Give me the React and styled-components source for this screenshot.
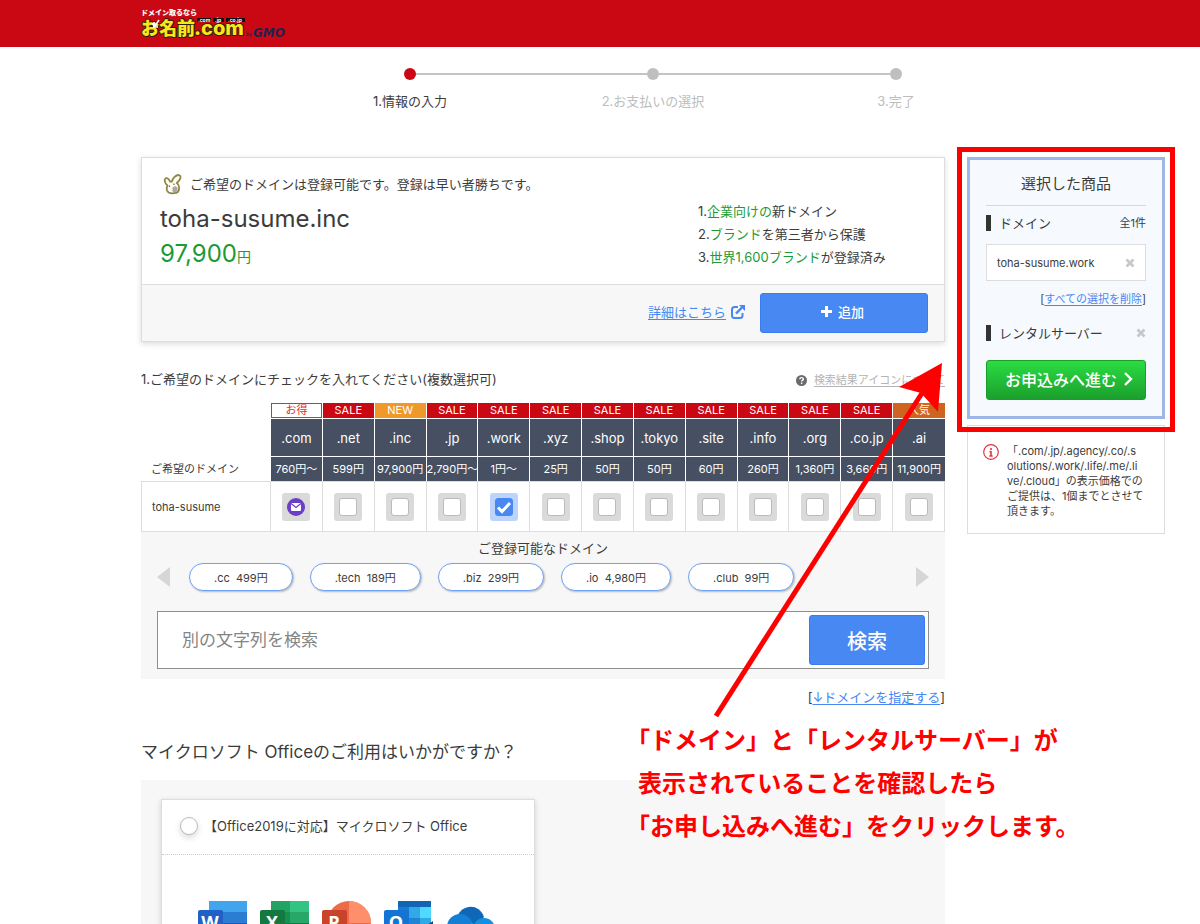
import React, { useState } from "react";
import styled, { createGlobalStyle, css } from "styled-components";

const GlobalStyle = createGlobalStyle`
  *, *::before, *::after { box-sizing: border-box; }
  html { scrollbar-width: none; }
  body {
    margin: 0;
    background: #fff;
    color: #3c3c3c;
    font-family: Inter, "Noto Sans CJK JP", sans-serif;
    font-size: 13px;
    line-height: 20px;
  }
  h1, h2, h3, p, ol, ul { margin: 0; padding: 0; font-weight: 400; }
  ol, ul { list-style: none; }
  button, input { font-family: inherit; color: inherit; }
  button { cursor: pointer; }
`;

const blue = "#4788f2";
const green = "#1c9a33";
const line = "#ddd";
const soft = "#f7f7f7";

const Header = styled.header`
  display: flex;
  height: 47px;
  padding: 8px 35px 0 141px;
  background: #ca0813;
`;

const Steps = styled.ol`
  display: flex;
  justify-content: center;
  padding: 21px 35px 0 141px;
`;

const Step = styled.li`
  width: 243px;
  text-align: center;
  color: ${(p) => (p.$active ? "#3c3c3c" : "#bdbdbd")};
`;

const Track = styled.div`
  display: flex;
  align-items: center;
  margin-bottom: 11px;
`;

const Rail = styled.span`
  flex: 1;
  height: 2px;
  background: ${(p) => (p.$hidden ? "transparent" : "#c4c4c4")};
`;

const Dot = styled.span`
  width: 12px;
  height: 12px;
  border-radius: 50%;
  background: ${(p) => (p.$active ? "#ca0813" : "#bfbfbf")};
`;

const Content = styled.div`
  position: relative;
  display: flex;
  align-items: flex-start;
  gap: 22px;
  padding: 46px 35px 0 141px;
`;

const Main = styled.main`
  flex: 1;
  min-width: 0;
`;

const Link = styled.a`
  color: ${(p) => (p.$muted ? "#b4b4b4" : blue)};
  text-decoration: underline;
  text-underline-offset: 2px;
`;

const OfferCard = styled.section`
  border: 1px solid ${line};
  background: #fff;
  box-shadow: 0 2px 6px rgba(0, 0, 0, 0.14);
`;

const OfferBody = styled.div`
  display: flex;
  justify-content: space-between;
  padding: 15px 56px 16px 18px;
  height: 126px;
`;

const OfferLead = styled.p`
  display: flex;
  align-items: center;
  gap: 7px;
  padding-left: 3px;
  height: 22px;
`;

const OfferName = styled.h1`
  font-size: 24px;
  line-height: 34px;
  margin-top: 7px;
`;

const OfferPrice = styled.p`
  font-size: 24px;
  line-height: 36px;
  color: ${green};
  small { font-size: 14px; }
`;

const OfferPoints = styled.ol`
  width: 190px;
  padding-top: 27px;
  line-height: 23px;
  white-space: nowrap;
  em { font-style: normal; color: ${green}; }
`;

const OfferFoot = styled.div`
  display: flex;
  align-items: center;
  justify-content: flex-end;
  gap: 15px;
  padding: 8px 16px;
  border-top: 1px solid ${line};
  background: ${soft};
`;

const DetailLink = styled(Link)`
  display: flex;
  align-items: center;
  gap: 5px;
  padding-bottom: 2px;
`;

const PrimaryButton = styled.button`
  display: flex;
  align-items: center;
  justify-content: center;
  gap: 5px;
  width: ${(p) => (p.$large ? 116 : 168)}px;
  height: ${(p) => (p.$large ? 50 : 40)}px;
  padding: ${(p) => (p.$large ? "0" : "0 4px 3px 0")};
  border: 1px solid #3a7cf0;
  border-radius: 3px;
  background: ${blue};
  color: #fff;
  font-size: ${(p) => (p.$large ? 20 : 13)}px;
  font-weight: 500;
`;

const SectionHead = styled.div`
  display: flex;
  align-items: center;
  justify-content: space-between;
  margin-top: 26px;
`;

const SectionTitle = styled.h2`
  font-size: 13px;
  line-height: 20px;
`;

const HelpNote = styled.span`
  display: flex;
  align-items: center;
  gap: 7px;
  padding-top: 2px;
  font-size: 11px;
`;

const DomainTable = styled.table`
  width: 100%;
  margin-top: 13px;
  border-spacing: 0;
  table-layout: fixed;
  text-align: center;
  th, td { padding: 0; font-weight: 400; white-space: nowrap; }
`;

const FirstCol = styled.col`
  width: 130px;
`;

const badgeLook = {
  otoku: css`background: #fff; color: #e02b33; border: 1px solid #e02b33;`,
  sale: css`background: #ca0813;`,
  hot: css`background: #cf6420;`,
  fresh: css`background: #f0992b;`,
};

const BadgeCell = styled.td`
  height: 16px;
  border-right: 1px solid #fff;
  border-bottom: 1px solid #fff;
  &:last-child { border-right: 0; }
`;

const Badge = styled.span`
  display: flex;
  align-items: center;
  justify-content: center;
  height: 15px;
  font-size: 11px;
  line-height: 13px;
  color: #fff;
  ${(p) => badgeLook[p.$kind]}
`;

const HeadCell = styled.th`
  height: ${(p) => (p.$price ? 24 : 38)}px;
  border-right: 1px solid #fff;
  border-bottom: ${(p) => (p.$price ? 0 : 1)}px solid #fff;
  background: #465062;
  color: #fff;
  font-size: ${(p) => (p.$price ? 11 : 13)}px;
  line-height: 16px;
  &:last-child { border-right: 0; }
`;

const RowLabel = styled.th`
  padding-left: 10px !important;
  text-align: left;
  font-size: 11px;
  line-height: 16px;
`;

const PickCell = styled.td`
  height: 51px;
  border: solid ${line};
  border-width: 1px 1px 1px 0;
`;

const NameCell = styled(RowLabel)`
  border: 1px solid ${line};
`;

const Pick = styled.label`
  display: flex;
  align-items: center;
  justify-content: center;
  width: 28px;
  height: 28px;
  margin: 0 auto;
  border-radius: 3px;
  background: #dadada;
  &:has(input:checked) { background: #bcd4fb; }
`;

const PickBox = styled.input.attrs({ type: "checkbox" })`
  appearance: none;
  width: 18px;
  height: 18px;
  margin: 0;
  border: 1px solid #bbb;
  border-radius: 3px;
  background: #fff;
  &:checked {
    border-color: ${blue};
    background: ${blue} url("data:image/svg+xml,%3Csvg xmlns='http://www.w3.org/2000/svg' viewBox='0 0 16 16'%3E%3Cpath d='M2 8.5l4 4L14 4' fill='none' stroke='white' stroke-width='3'/%3E%3C/svg%3E") center / 16px;
  }
`;

const MailButton = styled.button`
  display: flex;
  align-items: center;
  justify-content: center;
  width: 28px;
  height: 28px;
  margin: 0 auto;
  padding: 0;
  border: 0;
  border-radius: 3px;
  background: #dadada;
`;

const MorePanel = styled.section`
  padding: 6px 16px 10px;
  background: ${soft};
`;

const MoreTitle = styled.h3`
  font-size: 13px;
  line-height: 20px;
  text-align: center;
`;

const Carousel = styled.div`
  display: flex;
  align-items: center;
  justify-content: space-between;
  margin-top: 5px;
`;

const ArrowButton = styled.button`
  display: flex;
  padding: 0;
  border: 0;
  background: none;
`;

const Pills = styled.div`
  display: flex;
  flex: 1;
  gap: 17px;
  padding-left: 19px;
`;

const Pill = styled.button`
  height: 28px;
  padding: 0 24px;
  border: 1px solid #6fa3fa;
  border-radius: 14px;
  background: #fff;
  box-shadow: 1px 1px 2px rgba(0, 0, 0, 0.25);
  font-size: 11px;
  white-space: pre;
`;

const SearchBar = styled.form`
  display: flex;
  margin-top: 20px;
  padding: 3px;
  border: 1px solid #8f8f8f;
  background: #fff;
`;

const SearchInput = styled.input`
  flex: 1;
  min-width: 0;
  padding: 0 21px;
  border: 0;
  outline: 0;
  background: none;
  font-size: 17px;
  &::placeholder { color: #858585; opacity: 1; }
`;

const JumpLine = styled.p`
  margin-top: 8px;
  text-align: right;
`;

const OfficeTitle = styled.h2`
  margin-top: 33px;
  font-size: 17px;
  line-height: 24px;
`;

const OfficePanel = styled.section`
  margin-top: 16px;
  padding: 19px 20px;
  background: ${soft};
`;

const OfficeCard = styled.div`
  width: 374px;
  border: 1px solid ${line};
  background: #fff;
  box-shadow: 0 2px 6px rgba(0, 0, 0, 0.16);
`;

const OfficeChoice = styled.label`
  display: flex;
  align-items: center;
  gap: 6px;
  height: 55px;
  padding: 0 18px 2px;
  border-bottom: 1px dotted #ccc;
`;

const OfficeRadio = styled.input.attrs({ type: "radio" })`
  appearance: none;
  width: 18px;
  height: 18px;
  margin: 0;
  border: 1px solid #bbb;
  border-radius: 50%;
  background: #fff;
  box-shadow: 0 3px 6px rgba(0, 0, 0, 0.15);
  &:checked { border: 5px solid ${blue}; }
`;

const OfficeIcons = styled.div`
  display: flex;
  gap: 13px;
  padding: 46px 36px 24px;
`;

const Side = styled.aside`
  width: 198px;
  flex: none;
`;

const CartPanel = styled.section`
  position: relative;
  padding: 12px 16px 16px;
  border: 3px solid #9db8e8;
  background: #f6faff;
  &::after {
    content: "";
    position: absolute;
    inset: -13px -13px -16px;
    border: 5px solid #fe0000;
    pointer-events: none;
  }
`;

const CartTitle = styled.h2`
  padding-bottom: 10px;
  border-bottom: 1px solid #d5d8dc;
  font-size: 15px;
  line-height: 23px;
  text-align: center;
`;

const CartGroup = styled.div`
  display: flex;
  align-items: center;
  justify-content: space-between;
  margin-top: ${(p) => (p.$spaced ? 14 : 7)}px;
  font-size: 11px;
`;

const CartLabel = styled.h3`
  display: flex;
  align-items: center;
  gap: 8px;
  font-size: 13px;
  line-height: 20px;
  &::before { content: ""; width: 5px; height: 16px; background: #333; }
`;

const CartItem = styled.div`
  display: flex;
  align-items: center;
  justify-content: space-between;
  height: 37px;
  margin-top: 11px;
  padding: 0 10px;
  border: 1px solid ${line};
  background: #fff;
  font-size: 11px;
`;

const IconButton = styled.button`
  display: flex;
  padding: 0;
  border: 0;
  background: none;
`;

const ClearLine = styled.p`
  margin-top: 8px;
  font-size: 11px;
  text-align: right;
`;

const ProceedButton = styled.button`
  display: flex;
  align-items: center;
  justify-content: center;
  gap: 5px;
  width: 100%;
  height: 40px;
  margin-top: 17px;
  padding: 0 0 2px 7px;
  border: 1px solid #1b9c2b;
  border-radius: 3px;
  background: linear-gradient(#2bdc42, #1b9f2d);
  color: #fff;
  font-size: 16px;
  font-weight: 500;
`;

const Notice = styled.section`
  display: flex;
  gap: 8px;
  margin-top: 6px;
  padding: 18px 15px 14px;
  border: 1px solid ${line};
  font-size: 11px;
  line-height: 15px;
  svg { flex: none; }
  p { white-space: nowrap; }
`;

const Callout = styled.div`
  position: absolute;
  top: 252px;
  right: 120px;
  width: 475px;
  padding-left: 33px;
  pointer-events: none;
`;

const CalloutArrow = styled.svg`
  display: block;
  margin-left: 75px;
`;

const CalloutText = styled.p`
  color: #fe0000;
  font-family: "Noto Sans CJK JP", sans-serif;
  font-size: 24px;
  font-weight: 700;
  line-height: 43px;
  white-space: nowrap;
  text-spacing-trim: trim-start;
`;

const Logo = () => (
  <svg width="150" height="34" viewBox="0 0 150 34" role="img" aria-label="お名前.com by GMO">
    <g fontFamily="'Noto Sans CJK JP', sans-serif" fontWeight="900">
      <text x="0" y="7" fontSize="7" fill="#fff">ドメイン取るなら</text>
      <g fill="#fbe51c" stroke="#2a2206" strokeWidth="2" paintOrder="stroke" strokeLinejoin="round">
        <text x="0" y="27" fontSize="18">お名前</text>
        <text x="53" y="27" fontSize="20" fontFamily="Inter, sans-serif" fontWeight="800">.com</text>
      </g>
      <path d="M56 10h14v4h-14zM72 10h11v4h-11zM85 10h19v4h-19z" fill="#111" />
      <g fill="#fff" fontSize="5" fontFamily="Inter, sans-serif" fontWeight="700">
        <text x="57" y="14">.com</text>
        <text x="74" y="14">.jp</text>
        <text x="87" y="14">.co.jp</text>
      </g>
      <path d="M11 15l2 3M18 12l-4 6M12 19h5M13 14v5" stroke="#fff" strokeWidth="1.500" fill="none" />
      <g fill="#1d2450">
        <text x="105" y="28" fontSize="5" fontWeight="500" fontFamily="Inter, sans-serif">by</text>
        <text x="112" y="29" fontSize="12" fontFamily="'DejaVu Sans', sans-serif" fontWeight="700" fontStyle="italic">GMO</text>
      </g>
    </g>
  </svg>
);

const Bunny = () => (
  <svg width="20" height="22" viewBox="0 0 20 22" strokeLinejoin="round" aria-hidden="true">
    <path
      d="M4.500 12.500C1.800 10.500.8 6.500 2.800 5.200c2-.6 3.700 1.800 4.200 3.300l1.800.2C9.600 5.500 12.500 2 15.800 2c3 .8 2 4.700-2 8 2.500 1.500 2.500 4 2.200 6 0 2.800-2 4-5 4.200-4 .6-6-.2-7-2.700-.7-2 0-3.800.5-5z"
      fill="#fffdf0"
      stroke="#8d8748"
      strokeWidth="1.800"
    />
    <path d="M9.500 14.500l2.500-1.500 2.500 1.500v3.500l-3 1.500-2-1z" fill="#a9a9a0" />
    <path d="M6.500 12.500v1.500M11 10.500v1.500" stroke="#666" strokeWidth="1.200" />
  </svg>
);

const ExternalIcon = () => (
  <svg width="14" height="14" viewBox="0 0 14 14" fill="none" stroke={blue} strokeWidth="2" aria-hidden="true">
    <path d="M7 2H3.500Q1 2 1 4.500V10.500Q1 13 3.500 13H9Q11.500 13 11.500 10.500V8" />
    <path d="M5 8.500L11 2.500" strokeWidth="2.400" />
    <path d="M8 0H14V6z" fill={blue} stroke="none" />
  </svg>
);

const PlusIcon = () => (
  <svg width="13" height="13" viewBox="0 0 13 13" fill="#fff" aria-hidden="true">
    <path d="M5 1h3v4h4v3h-4v4h-3v-4h-4v-3h4z" />
  </svg>
);

const HelpIcon = () => (
  <svg width="11" height="11" viewBox="0 0 16 16" aria-hidden="true">
    <circle cx="8" cy="8" r="8" fill="#6b6b6b" />
    <path d="M5.500 6.200C5.500 3 10.700 3 10.700 6 10.700 8 8.200 7.800 8.200 9.600M8.200 11v2" fill="none" stroke="#fff" strokeWidth="2" />
  </svg>
);

const CrossIcon = () => (
  <svg width="10" height="10" viewBox="0 0 10 10" aria-hidden="true">
    <path d="M1.500 1.500l7 7M8.500 1.500l-7 7" stroke="#c8c8c8" strokeWidth="2.800" />
  </svg>
);

const ChevronIcon = () => (
  <svg width="12" height="14" viewBox="0 0 12 14" aria-hidden="true">
    <path d="M3 1l6 6-6 6" fill="none" stroke="#fff" strokeWidth="2.400" />
  </svg>
);

const MailIcon = () => (
  <svg width="18" height="18" viewBox="0 0 18 18" aria-hidden="true">
    <circle cx="9" cy="9" r="9" fill="#6c40c6" />
    <rect x="4" y="5" width="10" height="8" rx="1" fill="#fff" />
    <path d="M4 5.500l5 4 5-4" fill="none" stroke="#6c40c6" strokeWidth="1.200" />
  </svg>
);

const InfoIcon = () => (
  <svg width="16" height="16" viewBox="0 0 16 16" aria-hidden="true">
    <circle cx="8" cy="8" r="7.300" fill="none" stroke="#e03540" strokeWidth="1.200" />
    <path d="M8 4v2M8 7v5M6.500 7.500H8M6.300 12h3.400" stroke="#e03540" strokeWidth="1.600" />
  </svg>
);

const Triangle = ({ flip }) => (
  <svg width="13" height="20" viewBox="0 0 13 20" fill="#d6d6d6" aria-hidden="true">
    <path d={flip ? "M0 0v20l13-10z" : "M13 0v20l-13-10z"} />
  </svg>
);

const Letter = ({ color, children }) => (
  <g>
    <rect y="9" width="25" height="25" rx="2" fill={color} />
    <text x="12" y="28" textAnchor="middle" fontFamily="'Open Sans', sans-serif" fontWeight="700" fontSize="18" fill="#fff">
      {children}
    </text>
  </g>
);

const AppIcon = ({ label, children }) => (
  <svg width="49" height="45" viewBox="0 0 49 45" role="img" aria-label={label}>
    {children}
  </svg>
);

const sheets = (colors) =>
  colors.map((c, i) => <rect key={c} x="11" y={i * 11} width="38" height="12" fill={c} />);

const extensions = [
  [".com", "760円〜", "お得", "otoku"],
  [".net", "599円", "SALE", "sale"],
  [".inc", "97,900円", "NEW", "fresh"],
  [".jp", "2,790円〜", "SALE", "sale"],
  [".work", "1円〜", "SALE", "sale"],
  [".xyz", "25円", "SALE", "sale"],
  [".shop", "50円", "SALE", "sale"],
  [".tokyo", "50円", "SALE", "sale"],
  [".site", "60円", "SALE", "sale"],
  [".info", "260円", "SALE", "sale"],
  [".org", "1,360円", "SALE", "sale"],
  [".co.jp", "3,660円", "SALE", "sale"],
  [".ai", "11,900円", "人気", "hot"],
];

const others = [".cc  499円", ".tech  189円", ".biz  299円", ".io  4,980円", ".club  99円"];
const steps = ["1.情報の入力", "2.お支払いの選択", "3.完了"];

export default function App() {
  const [picked, setPicked] = useState({ ".work": true });
  const toggle = (ext) => setPicked((p) => ({ ...p, [ext]: !p[ext] }));

  return (
    <>
      <GlobalStyle />
      <Header><Logo /></Header>
      <Steps>
        {steps.map((label, i) => (
          <Step key={label} $active={i === 0}>
            <Track>
              <Rail $hidden={i === 0} />
              <Dot $active={i === 0} />
              <Rail $hidden={i === steps.length - 1} />
            </Track>
            {label}
          </Step>
        ))}
      </Steps>

      <Content>
        <Main>
          <OfferCard>
            <OfferBody>
              <div>
                <OfferLead><Bunny />ご希望のドメインは登録可能です。登録は早い者勝ちです。</OfferLead>
                <OfferName>toha-susume.inc</OfferName>
                <OfferPrice>97,900<small>円</small></OfferPrice>
              </div>
              <OfferPoints>
                <li>1.<em>企業向けの</em>新ドメイン</li>
                <li>2.<em>ブランド</em>を第三者から保護</li>
                <li>3.<em>世界1,600ブランド</em>が登録済み</li>
              </OfferPoints>
            </OfferBody>
            <OfferFoot>
              <DetailLink href="#detail">詳細はこちら<ExternalIcon /></DetailLink>
              <PrimaryButton type="button"><PlusIcon />追加</PrimaryButton>
            </OfferFoot>
          </OfferCard>

          <SectionHead>
            <SectionTitle>1.ご希望のドメインにチェックを入れてください(複数選択可)</SectionTitle>
            <HelpNote><HelpIcon /><Link $muted href="#icons">検索結果アイコンについて</Link></HelpNote>
          </SectionHead>

          <DomainTable>
            <colgroup>
              <FirstCol />
              {extensions.map(([ext]) => <col key={ext} />)}
            </colgroup>
            <thead>
              <tr>
                <td />
                {extensions.map(([ext, , badge, kind]) => (
                  <BadgeCell key={ext}><Badge $kind={kind}>{badge}</Badge></BadgeCell>
                ))}
              </tr>
              <tr>
                <td />
                {extensions.map(([ext]) => <HeadCell key={ext} scope="col">{ext}</HeadCell>)}
              </tr>
              <tr>
                <RowLabel scope="col">ご希望のドメイン</RowLabel>
                {extensions.map(([ext, price]) => <HeadCell key={ext} $price>{price}</HeadCell>)}
              </tr>
            </thead>
            <tbody>
              <tr>
                <NameCell scope="row">toha-susume</NameCell>
                {extensions.map(([ext]) => (
                  <PickCell key={ext}>
                    {ext === ".com" ? (
                      <MailButton type="button" aria-label="toha-susume.com"><MailIcon /></MailButton>
                    ) : (
                      <Pick>
                        <PickBox
                          aria-label={`toha-susume${ext}`}
                          checked={!!picked[ext]}
                          onChange={() => toggle(ext)}
                        />
                      </Pick>
                    )}
                  </PickCell>
                ))}
              </tr>
            </tbody>
          </DomainTable>

          <MorePanel>
            <MoreTitle>ご登録可能なドメイン</MoreTitle>
            <Carousel>
              <ArrowButton type="button" aria-label="前へ"><Triangle /></ArrowButton>
              <Pills>
                {others.map((text) => <Pill type="button" key={text}>{text}</Pill>)}
              </Pills>
              <ArrowButton type="button" aria-label="次へ"><Triangle flip /></ArrowButton>
            </Carousel>
            <SearchBar onSubmit={(e) => e.preventDefault()}>
              <SearchInput type="text" aria-label="別の文字列を検索" placeholder="別の文字列を検索" />
              <PrimaryButton $large type="submit">検索</PrimaryButton>
            </SearchBar>
          </MorePanel>

          <JumpLine>[<Link href="#specify">↓ドメインを指定する</Link>]</JumpLine>

          <OfficeTitle>マイクロソフト Officeのご利用はいかがですか？</OfficeTitle>
          <OfficePanel>
            <OfficeCard>
              <OfficeChoice>
                <OfficeRadio name="office" />
                【Office2019に対応】マイクロソフト Office
              </OfficeChoice>
              <OfficeIcons>
                <AppIcon label="Word">
                  {sheets(["#41a5ee", "#2b7cd3", "#185abd", "#103f91"])}
                  <Letter color="#2160c4">W</Letter>
                </AppIcon>
                <AppIcon label="Excel">
                  {sheets(["#21a366", "#159152", "#107c41", "#185c37"])}
                  <rect x="30" width="19" height="12" fill="#33c481" />
                  <rect x="30" y="11" width="19" height="11" fill="#27a868" />
                  <Letter color="#15783f">X</Letter>
                </AppIcon>
                <AppIcon label="PowerPoint">
                  <circle cx="27" cy="22" r="22" fill="#ed6c47" />
                  <path d="M27 0a22 22 0 0 1 22 22H27z" fill="#ff8f6b" />
                  <Letter color="#c8432a">P</Letter>
                </AppIcon>
                <AppIcon label="Outlook">
                  <path d="M14 0h33v36H14z" fill="#1066b5" />
                  <path d="M14 6h11v11H14z" fill="#1a7ad4" />
                  <path d="M25 6h11v11H25z" fill="#32a9e7" />
                  <path d="M36 6h11v11H36z" fill="#50d9ff" />
                  <path d="M25 17h11v11H25z" fill="#1f83d6" />
                  <path d="M36 17h11v11H36z" fill="#32a9e7" />
                  <path d="M46 22l3-2v25H8z" fill="#0f4f8a" />
                  <Letter color="#1474d4">O</Letter>
                </AppIcon>
                <AppIcon label="OneDrive">
                  <path d="M11 16C16 3 33 2 38 16L25 32z" fill="#0f67b8" />
                  <circle cx="14" cy="26" r="13" fill="#1380d5" />
                  <circle cx="38" cy="28" r="11" fill="#1590e0" />
                  <path d="M6 36l20-14 20 14H6z" fill="#28a8ea" />
                </AppIcon>
              </OfficeIcons>
            </OfficeCard>
          </OfficePanel>
        </Main>

        <Side>
          <CartPanel>
            <CartTitle>選択した商品</CartTitle>
            <CartGroup><CartLabel>ドメイン</CartLabel>全1件</CartGroup>
            <CartItem>
              toha-susume.work
              <IconButton type="button" aria-label="toha-susume.workを削除"><CrossIcon /></IconButton>
            </CartItem>
            <ClearLine>[<Link href="#clear">すべての選択を削除</Link>]</ClearLine>
            <CartGroup $spaced>
              <CartLabel>レンタルサーバー</CartLabel>
              <IconButton type="button" aria-label="レンタルサーバーを削除"><CrossIcon /></IconButton>
            </CartGroup>
            <ProceedButton type="button">お申込みへ進む<ChevronIcon /></ProceedButton>
          </CartPanel>
          <Notice>
            <InfoIcon />
            <p>
              「.com/.jp/.agency/.co/.s<br />
              olutions/.work/.life/.me/.li<br />
              ve/.cloud」の表示価格での<br />
              ご提供は、1個までとさせて<br />
              頂きます。
            </p>
          </Notice>
        </Side>

        <Callout>
          <CalloutArrow width="230" height="354" viewBox="0 0 230 354" aria-hidden="true">
            <path d="M3 353L211 27" stroke="#fe0000" strokeWidth="5" />
            <path d="M229 0L186 24L208 30L225 49z" fill="#fe0000" />
          </CalloutArrow>
          <CalloutText>
            「ドメイン」と「レンタルサーバー」が<br />
            表示されていることを確認したら<br />
            「お申し込みへ進む」をクリックします。
          </CalloutText>
        </Callout>
      </Content>
    </>
  );
}
